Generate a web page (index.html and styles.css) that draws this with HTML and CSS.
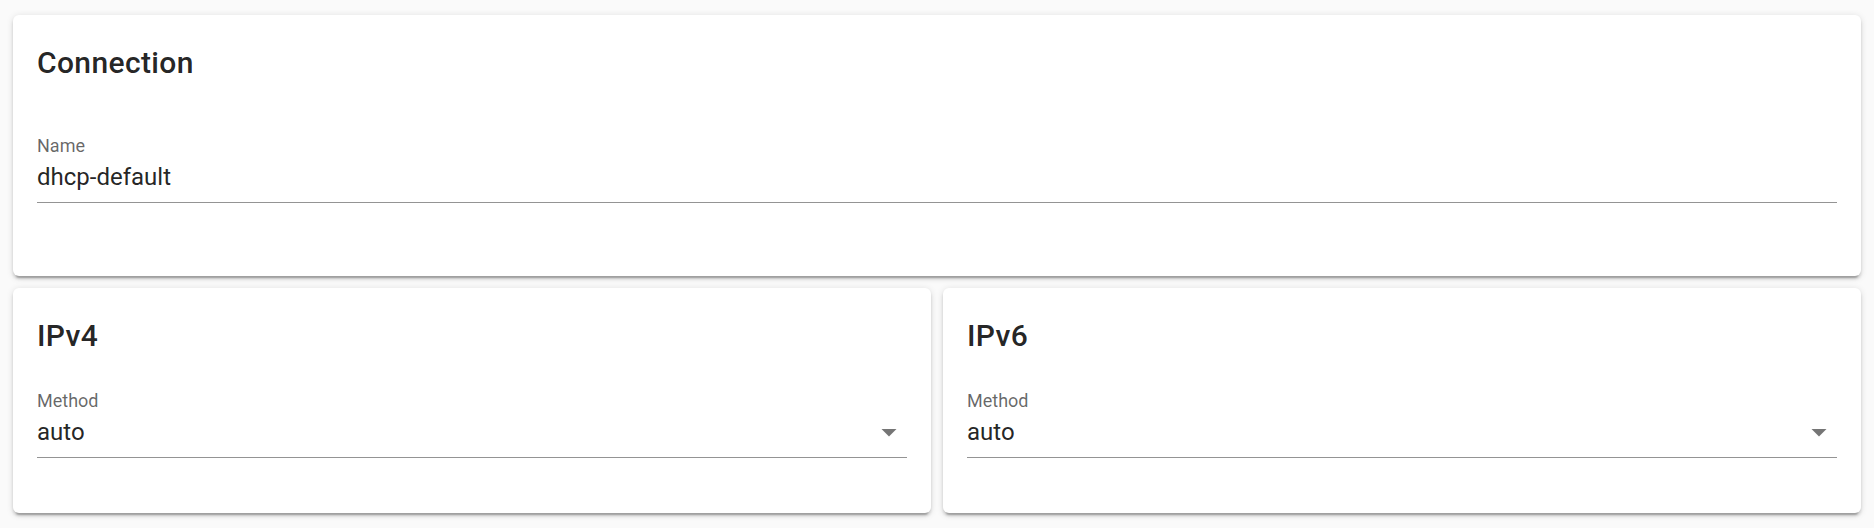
FILE: index.html
```html
<!DOCTYPE html>
<html lang="en">
<head>
<meta charset="utf-8">
<title>Connection</title>
<link rel="stylesheet" href="styles.css">
</head>
<body>
<main class="page">
  <section class="card">
    <h2 class="card-title">Connection</h2>
    <div class="card-text card-text--padded">
      <div class="field">
        <label class="field-label">Name</label>
        <div class="field-row">
          <span class="field-value">dhcp-default</span>
        </div>
      </div>
    </div>
  </section>
  <div class="card-grid">
    <section class="card">
      <h2 class="card-title">IPv4</h2>
      <div class="card-text">
        <div class="field">
          <label class="field-label">Method</label>
          <div class="field-row">
            <span class="field-value">auto</span>
            <svg class="field-icon" viewBox="0 0 24 24" width="36" height="36" aria-hidden="true"><path d="M7,10L12,15L17,10H7Z"/></svg>
          </div>
        </div>
      </div>
    </section>
    <section class="card">
      <h2 class="card-title">IPv6</h2>
      <div class="card-text">
        <div class="field">
          <label class="field-label">Method</label>
          <div class="field-row">
            <span class="field-value">auto</span>
            <svg class="field-icon" viewBox="0 0 24 24" width="36" height="36" aria-hidden="true"><path d="M7,10L12,15L17,10H7Z"/></svg>
          </div>
        </div>
      </div>
    </section>
  </div>
</main>
</body>
</html>
```

FILE: styles.css
```css
* { box-sizing: border-box; }

html, body {
  margin: 0;
  background: #fafafa;
  font-family: Roboto, "Noto Sans", "Liberation Sans", sans-serif;
  color: rgba(0, 0, 0, 0.87);
}

.page {
  padding: 15px 13px;
  display: flex;
  flex-direction: column;
  gap: 12px;
}

.card-grid {
  display: grid;
  grid-template-columns: 1fr 1fr;
  gap: 12px;
}

.card {
  background: #fff;
  border-radius: 6px;
  box-shadow:
    0 4.5px 1.5px -3px rgba(0, 0, 0, 0.2),
    0 3px 3px 0 rgba(0, 0, 0, 0.14),
    0 1.5px 7.5px 0 rgba(0, 0, 0, 0.12);
}

.card-title {
  margin: 0;
  padding: 24px;
  font-size: 30px;
  font-weight: 500;
  line-height: 48px;
  letter-spacing: 0.0125em;
}

.card-text {
  padding: 5px 24px 55px;
}

.card-text--padded {
  padding-top: 23px;
  padding-bottom: 73px;
}

.field-label {
  display: block;
  font-size: 18px;
  line-height: 24px;
  color: rgba(0, 0, 0, 0.6);
}

.field-row {
  display: flex;
  align-items: center;
  height: 45px;
  padding-bottom: 6px;
  border-bottom: 1px solid rgba(0, 0, 0, 0.42);
}

.field-value {
  flex: 1;
  font-size: 24px;
  line-height: 38px;
}

.field-icon {
  flex: none;
  fill: rgba(0, 0, 0, 0.54);
}
```
